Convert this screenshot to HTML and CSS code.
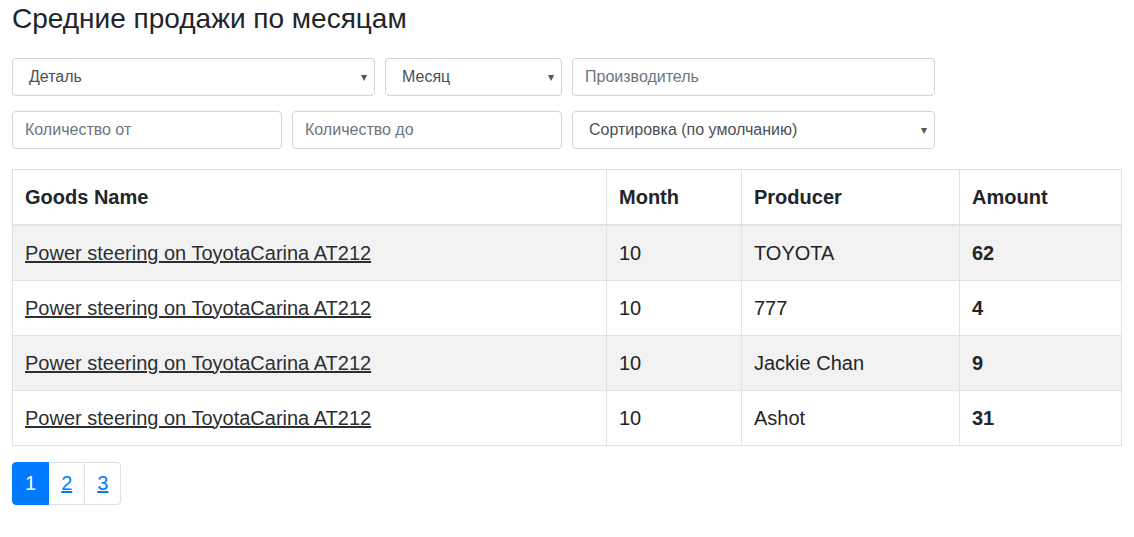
FILE: index.html
```html
<!DOCTYPE html>
<html lang="ru">
<head>
<meta charset="utf-8">
<title>Средние продажи по месяцам</title>
<link rel="stylesheet" href="styles.css">
</head>
<body>
<div class="wrap">
  <h3 class="title">Средние продажи по месяцам</h3>
  <div class="filters">
    <div class="frow">
      <div class="select w363"><span>Деталь</span><i class="arrow">▾</i></div>
      <div class="select w177"><span>Месяц</span><i class="arrow">▾</i></div>
      <input class="input w363" type="text" placeholder="Производитель">
    </div>
    <div class="frow">
      <input class="input w270" type="text" placeholder="Количество от">
      <input class="input w270" type="text" placeholder="Количество до">
      <div class="select w363"><span>Сортировка (по умолчанию)</span><i class="arrow">▾</i></div>
    </div>
  </div>
  <table class="table">
    <thead>
      <tr><th class="c1">Goods Name</th><th class="c2">Month</th><th class="c3">Producer</th><th class="c4">Amount</th></tr>
    </thead>
    <tbody>
      <tr><td><a href="#">Power steering on ToyotaCarina AT212</a></td><td>10</td><td>TOYOTA</td><td><b>62</b></td></tr>
      <tr><td><a href="#">Power steering on ToyotaCarina AT212</a></td><td>10</td><td>777</td><td><b>4</b></td></tr>
      <tr><td><a href="#">Power steering on ToyotaCarina AT212</a></td><td>10</td><td>Jackie Chan</td><td><b>9</b></td></tr>
      <tr><td><a href="#">Power steering on ToyotaCarina AT212</a></td><td>10</td><td>Ashot</td><td><b>31</b></td></tr>
    </tbody>
  </table>
  <ul class="pagination">
    <li class="pg-item active"><span class="pg-link">1</span></li>
    <li class="pg-item"><a class="pg-link" href="#">2</a></li>
    <li class="pg-item"><a class="pg-link" href="#">3</a></li>
  </ul>
</div>
</body>
</html>
```
FILE: styles.css
```css
* { box-sizing: border-box; }
html, body { margin: 0; background: #fff; }
body {
  font-family: "Liberation Sans", Arial, sans-serif;
  color: #212529;
  font-size: 16px;
  line-height: 1.5;
}
.wrap { padding: 0 12px; }
.title {
  font-size: 28px;
  font-weight: 500;
  line-height: 1.2;
  margin: 2px 0 0;
  color: #212529;
}
.filters { margin-top: 22px; }
.frow { display: flex; gap: 10px; margin-bottom: 15px; }
.w363 { width: 363px; }
.w177 { width: 177px; }
.w270 { width: 270px; }
.input, .select {
  height: 38px;
  border: 1px solid #ced4da;
  border-radius: 4px;
  background: #fff;
  font-family: "Liberation Sans", Arial, sans-serif;
  font-size: 16px;
  color: #495057;
}
.input { padding: 6px 12px; outline: none; }
.input::placeholder { color: #6c757d; opacity: 1; }
.select {
  display: flex;
  align-items: center;
  justify-content: space-between;
  padding: 0 7px 0 16px;
}
.arrow { font-style: normal; font-size: 12px; color: #555; }
.table {
  width: 1110px;
  border-collapse: collapse;
  margin-top: 20px;
  font-size: 20px;
  line-height: 30px;
  border: 1px solid #dee2e6;
}
.table th, .table td {
  border: 1px solid #dee2e6;
  padding: 12px;
  text-align: left;
  vertical-align: top;
}
.table th { font-weight: 700; border-bottom-width: 2px; }
.table tbody tr:nth-child(odd) { background: #f2f2f2; }
.table a { color: #2b2f33; text-decoration: underline; }
.c1 { width: 594px; }
.c2 { width: 135px; }
.c3 { width: 218px; }
.pagination {
  list-style: none;
  display: flex;
  margin: 16px 0 0;
  padding: 0;
  font-size: 20px;
  line-height: 25px;
}
.pg-link {
  display: block;
  padding: 8px 12px;
  border: 1px solid #dee2e6;
  margin-left: -1px;
  color: #007bff;
  background: #fff;
}
.pg-item:first-child .pg-link { margin-left: 0; border-radius: 4px 0 0 4px; }
.pg-item:last-child .pg-link { border-radius: 0 4px 4px 0; }
.pg-item.active .pg-link { background: #007bff; border-color: #007bff; color: #fff; position: relative; z-index: 1; }
a.pg-link { text-decoration: underline; }
```
